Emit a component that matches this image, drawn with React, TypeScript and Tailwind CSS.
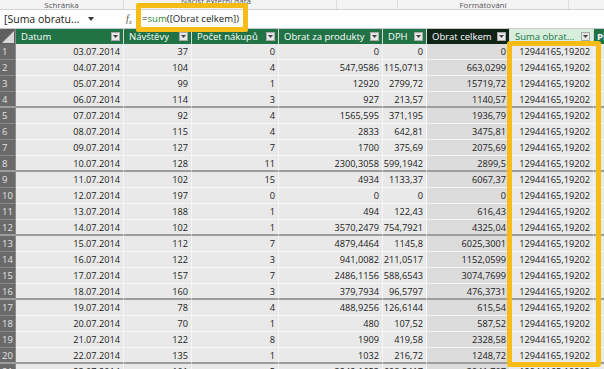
import React from "react";

type Row = [string, string, string, string, string, string];

const rows: Row[] = [
  ["03.07.2014", "37", "0", "0", "0", "0"],
  ["04.07.2014", "104", "4", "547,9586", "115,0713", "663,0299"],
  ["05.07.2014", "99", "1", "12920", "2799,72", "15719,72"],
  ["06.07.2014", "114", "3", "927", "213,57", "1140,57"],
  ["07.07.2014", "92", "4", "1565,595", "371,195", "1936,79"],
  ["08.07.2014", "115", "4", "2833", "642,81", "3475,81"],
  ["09.07.2014", "127", "7", "1700", "375,69", "2075,69"],
  ["10.07.2014", "128", "11", "2300,3058", "599,1942", "2899,5"],
  ["11.07.2014", "102", "15", "4934", "1133,37", "6067,37"],
  ["12.07.2014", "197", "0", "0", "0", "0"],
  ["13.07.2014", "188", "1", "494", "122,43", "616,43"],
  ["14.07.2014", "102", "1", "3570,2479", "754,7921", "4325,04"],
  ["15.07.2014", "112", "7", "4879,4464", "1145,8", "6025,3001"],
  ["16.07.2014", "122", "3", "941,0082", "211,0517", "1152,0599"],
  ["17.07.2014", "157", "7", "2486,1156", "588,6543", "3074,7699"],
  ["18.07.2014", "160", "3", "379,7934", "96,5797", "476,3731"],
  ["19.07.2014", "78", "4", "488,9256", "126,6144", "615,54"],
  ["20.07.2014", "70", "1", "480", "107,52", "587,52"],
  ["21.07.2014", "122", "8", "1909", "419,58", "2328,58"],
  ["22.07.2014", "135", "1", "1032", "216,72", "1248,72"],
  ["23.07.2014", "101", "5", "3242,1653", "698,5417", "3941,707"],
];

const widths = ["w-[108px]", "w-[68px]", "w-[87px]", "w-[104px]", "w-[44px]", "w-[83px]", "w-[84px]"];
const headers = ["Datum", "Návštěvy", "Počet nákupů", "Obrat za produkty", "DPH", "Obrat celkem", "Suma obrat..."];

function FilterButton() {
  return (
    <span className="ml-auto mr-[3px] flex h-[9px] w-[9px] shrink-0 items-center justify-center border border-[#a9a9a9] bg-[#e8e8e8]">
      <svg width="5" height="3" viewBox="0 0 5 3">
        <path d="M0 0h5L2.5 3z" fill="#444" />
      </svg>
    </span>
  );
}

function HeaderRow() {
  return (
    <div className="flex h-[15px] text-[9.5px] leading-[15px]">
      <div className="relative w-[16px] shrink-0 border-r border-[#8a8a8a] bg-[#5f5f5f]">
        <svg className="absolute bottom-[1px] right-[1px]" width="12" height="12" viewBox="0 0 12 12">
          <path d="M12 0v12H0z" fill="#d9d9d9" />
        </svg>
      </div>
      {headers.map((h, i) => {
        const tone =
          i === 5
            ? "bg-[#0f2317] text-white"
            : i === 6
              ? "bg-[#d6eedb] text-[#217346]"
              : "bg-[#217346] text-white";
        return (
          <div
            key={h}
            className={`${widths[i]} ${tone} flex shrink-0 items-center border-r border-[#d8d8d8] pl-[5px]`}
          >
            <span className="truncate">{h}</span>
            <FilterButton />
          </div>
        );
      })}
      <div className="min-w-0 flex-1 overflow-hidden whitespace-nowrap bg-[#217346] pl-[3px] font-bold text-white">
        Přidat sloupec
      </div>
    </div>
  );
}

function DataRow({ row, index }: { row: Row; index: number }) {
  const group = (index + 1) % 4 === 0;
  const line = group ? "border-b-2 border-b-[#9d9d9d]" : "border-b border-b-[#f6f6f6]";
  const cells = [...row, "12944165,19202"];
  return (
    <div className="flex h-[16px] shrink-0 text-[9.2px] leading-[15px] text-[#1a1a1a]">
      <div
        className={`w-[16px] shrink-0 pl-[2px] text-[9.5px] text-[#e2e2e2] bg-[#6a6a6a] border-r border-[#8a8a8a] ${
          group ? "border-b-2 border-b-[#9d9d9d]" : "border-b border-b-[#888]"
        }`}
      >
        {index + 1}
      </div>
      {cells.map((c, i) => (
        <div
          key={i}
          className={`${widths[i]} ${line} ${
            i === 5 ? "bg-[#dcdcdc]" : "bg-[#e9e9e9]"
          } shrink-0 overflow-hidden whitespace-nowrap border-r border-r-[#f6f6f6] pr-[3px] text-right`}
        >
          {c}
        </div>
      ))}
      <div className={`flex-1 bg-[#e9e9e9] ${line}`} />
    </div>
  );
}

export default function App() {
  return (
    <div
      className="relative h-[369px] w-[604px] overflow-hidden bg-[#d6d6d6]"
      style={{ fontFamily: '"Open Sans", "Noto Sans", sans-serif' }}
    >
      {/* ribbon group labels */}
      <div className="flex h-[10px] overflow-hidden border-b border-[#d2d2d2] bg-[#f3f3f3] text-[8px] leading-[8px] text-[#555]">
        <div className="flex w-[124px] justify-center border-r border-[#dadada] pt-[1px]">Schránka</div>
        <div className="flex w-[213px] justify-center border-r border-[#dadada]">
          <span className="-mt-[3px] -translate-x-[14px]">Načíst externí data</span>
        </div>
        <div className="w-[61px] border-r border-[#dadada]" />
        <div className="flex w-[171px] justify-center border-r border-[#dadada] pt-[1px]">Formátování</div>
        <div className="flex-1" />
      </div>

      {/* formula bar */}
      <div className="flex h-[18px] items-center bg-white leading-[18px] text-[#222]">
        <div className="flex w-[126px] items-center pl-[4px] text-[10.5px]">
          <span>[Suma obratu...</span>
          <svg className="ml-[9px]" width="6" height="4" viewBox="0 0 6 4">
            <path d="M0 0h6L3 4z" fill="#333" />
          </svg>
        </div>
        <span className="w-[16px] text-[10px] italic text-[#555]" style={{ fontFamily: '"Liberation Serif", serif' }}>
          f<sub className="text-[7px]">x</sub>
        </span>
        <span className="text-[9.6px]">
          =<span className="text-[#1f8a2f]">sum</span>([Obrat celkem])
        </span>
      </div>

      <div className="h-[1px] bg-[#c8c8c8]" />

      <HeaderRow />
      <div className="flex flex-col">
        {rows.map((r, i) => (
          <DataRow key={i} row={r} index={i} />
        ))}
      </div>

      {/* highlight frames */}
      <div className="pointer-events-none absolute left-[136px] top-[3px] h-[29px] w-[112px] rounded-[2px] border-[5px] border-[#f7bd16]" />
      <div className="pointer-events-none absolute left-[507px] top-[41px] h-[326px] w-[94px] rounded-[3px] border-[5px] border-[#f7bd16]" />
    </div>
  );
}
